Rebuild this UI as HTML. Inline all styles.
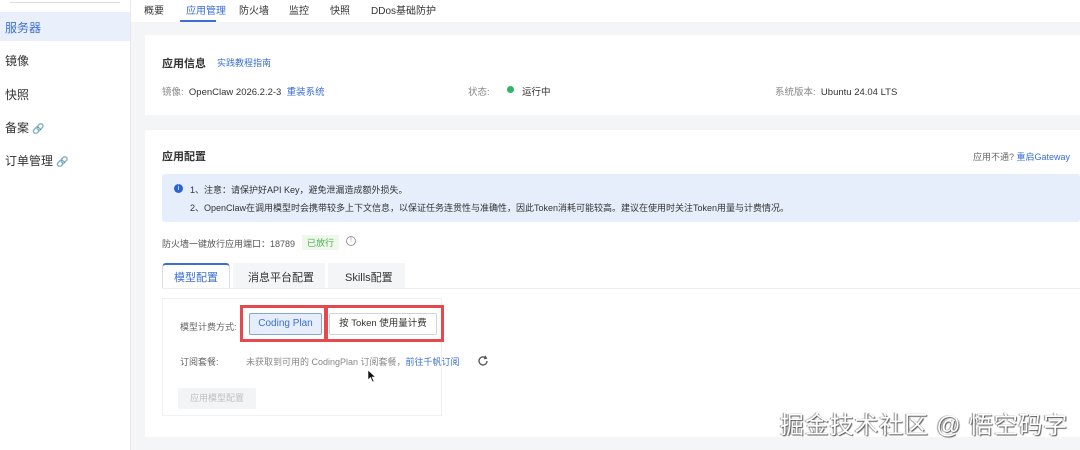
<!DOCTYPE html>
<html><head><meta charset="utf-8"><style>
*{margin:0;padding:0;box-sizing:border-box}
body{width:1080px;height:450px;overflow:hidden;background:#f4f5f7;font-family:"Liberation Sans","Noto Sans CJK SC",sans-serif;color:#333;font-size:10px;position:relative}
.a{position:absolute;white-space:nowrap}
.side{position:absolute;left:0;top:0;width:131px;height:450px;background:#fff;border-right:1px solid #e8e8ec}
.side .it{position:absolute;left:5px;font-size:12px;color:#333}
.side .it.blue,.blue{color:#3b6fd6}
.card{position:absolute;background:#fff}
.btn{position:absolute;border:1px solid #cfd3da;border-radius:2px;font-size:10px;text-align:center}
.red{position:absolute;border:3px solid #e5484d}
</style></head><body>
<div class="side">
<div class="a" style="left:10px;top:0;width:110px;height:3px;border-bottom:1px solid #ddd"></div>
<div class="a" style="left:0;top:12px;width:130px;height:29px;background:#eaf0fb"></div>
<div class="it blue" style="top:19px">服务器</div>
<div class="it" style="top:52px">镜像</div>
<div class="it" style="top:86px">快照</div>
<div class="it" style="top:119px">备案 <span style="color:#aaa;font-size:10px">🔗</span></div>
<div class="it" style="top:152px">订单管理 <span style="color:#aaa;font-size:10px">🔗</span></div>
</div>
<div class="card" style="left:131px;top:0;width:949px;height:22px"></div>
<div class="a" style="left:144px;top:2px;font-size:10px">概要</div>
<div class="a blue" style="left:186px;top:2px;font-size:10px">应用管理</div>
<div class="a" style="left:180px;top:20px;width:36px;height:2px;background:#3b6fd6"></div>
<div class="a" style="left:239px;top:2px">防火墙</div>
<div class="a" style="left:289px;top:2px">监控</div>
<div class="a" style="left:330px;top:2px">快照</div>
<div class="a" style="left:371px;top:2px">DDos基础防护</div>

<div class="card" style="left:145px;top:35px;width:935px;height:80px"></div>
<div class="a" style="left:162px;top:55px;font-size:11px;font-weight:bold">应用信息</div>
<div class="a blue" style="left:217px;top:56px;font-size:9px">实践教程指南</div>
<div class="a" style="left:162px;top:84px;font-size:9.5px"><span style="color:#888">镜像:</span>&nbsp; OpenClaw 2026.2.2-3 &nbsp;<span class="blue">重装系统</span></div>
<div class="a" style="left:468px;top:84px;font-size:9.5px"><span style="color:#888">状态:</span></div>
<div class="a" style="left:507px;top:86px;width:7px;height:7px;border-radius:50%;background:#2fb56a"></div>
<div class="a" style="left:522px;top:84px;font-size:9.5px">运行中</div>
<div class="a" style="left:775px;top:84px;font-size:9.5px"><span style="color:#888">系统版本:</span>&nbsp; Ubuntu 24.04 LTS</div>

<div class="card" style="left:145px;top:130px;width:935px;height:307px"></div>
<div class="a" style="left:162px;top:148px;font-size:11px;font-weight:bold">应用配置</div>
<div class="a" style="left:973px;top:150px;font-size:9px;color:#666">应用不通? <span class="blue">重启Gateway</span></div>
<div class="a" style="left:162px;top:174px;width:918px;height:48px;background:#e6eefb;border-radius:3px"></div>
<div class="a" style="left:174px;top:184px;width:9px;height:9px;border-radius:50%;background:#2a62d8;color:#fff;font-size:7px;text-align:center;line-height:9px">i</div>
<div class="a" style="left:190px;top:183px;font-size:9px">1、注意：请保护好API Key，避免泄漏造成额外损失。</div>
<div class="a" style="left:190px;top:201px;font-size:9px">2、OpenClaw在调用模型时会携带较多上下文信息，以保证任务连贯性与准确性，因此Token消耗可能较高。建议在使用时关注Token用量与计费情况。</div>
<div class="a" style="left:162px;top:237px;font-size:9px;color:#555">防火墙一键放行应用端口：18789</div>
<div class="a" style="left:302px;top:235px;padding:1px 5px;background:#eef8ec;color:#4caf50;font-size:9px">已放行</div>
<div class="a" style="left:346px;top:236px;width:10px;height:10px;border:1px solid #999;border-radius:50%;font-size:7px;text-align:center;line-height:8px;color:#999">!</div>
<div class="a" style="left:162px;top:263px;width:68px;height:25px;border:1px solid #d6dbe3;border-bottom:none;border-top:2px solid #3b6fd6;border-radius:4px 4px 0 0;background:#fff"></div>
<div class="a blue" style="left:174px;top:269px;font-size:11px">模型配置</div>
<div class="a" style="left:233px;top:263px;width:92px;height:25px;background:#f4f5f7"></div>
<div class="a" style="left:248px;top:269px;font-size:11px">消息平台配置</div>
<div class="a" style="left:328px;top:263px;width:77px;height:25px;background:#f4f5f7"></div>
<div class="a" style="left:345px;top:269px;font-size:11px">Skills配置</div>
<div class="a" style="left:162px;top:288px;width:918px;height:1px;background:#eceef2"></div>
<div class="a" style="left:162px;top:298px;width:280px;height:118px;border:1px solid #f0f1f4"></div>
<div class="a" style="left:180px;top:320px;font-size:9px;color:#666">模型计费方式:</div>
<div class="btn blue" style="left:249px;top:313px;width:73px;height:22px;line-height:20px;background:#e6eefb;border-color:#8aa6d8">Coding Plan</div>
<div class="btn" style="left:329px;top:313px;width:108px;height:22px;line-height:20px;font-size:9.5px">按 Token 使用量计费</div>
<div class="red" style="left:240px;top:305px;width:87px;height:37px"></div>
<div class="red" style="left:325px;top:305px;width:119px;height:37px"></div>
<div class="a" style="left:180px;top:355px;font-size:9px;color:#666">订阅套餐:</div>
<div class="a" style="left:246px;top:355px;font-size:9px;color:#888">未获取到可用的 CodingPlan 订阅套餐，<span class="blue">前往千帆订阅</span></div>
<svg class="a" style="left:477px;top:355px" width="12" height="12" viewBox="0 0 12 12"><path d="M10 6A4 4 0 1 1 8.5 2.8" fill="none" stroke="#555" stroke-width="1.3"/><path d="M8 0.8L9.5 3.2 7 3.8" fill="none" stroke="#555" stroke-width="1.2"/></svg>
<svg class="a" style="left:367px;top:369px" width="10" height="14" viewBox="0 0 10 14"><path d="M1 1L1 11 3.5 8.5 5.5 13 7 12.3 5 8 8.5 8Z" fill="#111" stroke="#fff" stroke-width="0.6"/></svg>
<div class="a" style="left:178px;top:388px;width:78px;height:21px;background:#f3f4f6;border-radius:2px;color:#c0c0c0;font-size:9px;text-align:center;line-height:21px">应用模型配置</div>
<div class="a" style="left:780px;top:405px;font-size:24px;letter-spacing:0.8px;color:#fff;text-shadow:1px 1px 1px #555,-1px 0 1px #888">掘金技术社区 @ 悟空码字</div>
</body></html>
